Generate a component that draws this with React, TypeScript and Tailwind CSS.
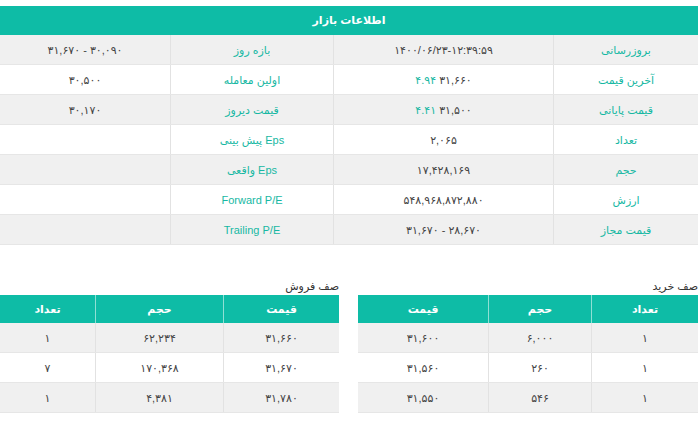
const font = { fontFamily: '"Liberation Sans", "DejaVu Sans", sans-serif' };

type Cell = { text: string; accent?: string };

const infoRows: [string, Cell, string, Cell][] = [
  ["بروزرسانی", { text: "۱۴۰۰/۰۶/۲۳-۱۲:۳۹:۵۹" }, "بازه روز", { text: "۳۱,۶۷۰ - ۳۰,۰۹۰" }],
  ["آخرین قیمت", { text: "۳۱,۶۶۰", accent: "۴.۹۴" }, "اولین معامله", { text: "۳۰,۵۰۰" }],
  ["قیمت پایانی", { text: "۳۱,۵۰۰", accent: "۴.۴۱" }, "قیمت دیروز", { text: "۳۰,۱۷۰" }],
  ["تعداد", { text: "۲,۰۶۵" }, "Eps پیش بینی", { text: "" }],
  ["حجم", { text: "۱۷,۴۲۸,۱۶۹" }, "Eps واقعی", { text: "" }],
  ["ارزش", { text: "۵۴۸,۹۶۸,۸۷۲,۸۸۰" }, "Forward P/E", { text: "" }],
  ["قیمت مجاز", { text: "۳۱,۶۷۰ - ۲۸,۶۷۰" }, "Trailing P/E", { text: "" }],
];

function Value({ cell }: { cell: Cell }) {
  return (
    <span dir="ltr" className="text-[#444]">
      {cell.accent && <span className="text-[#17b8a3]">{cell.accent} </span>}
      {cell.text}
    </span>
  );
}

function InfoTable() {
  return (
    <div>
      <div className="h-[29px] bg-[#0ebca6] flex items-center justify-center text-white font-bold text-[11px]">
        اطلاعات بازار
      </div>
      {infoRows.map((r, i) => (
        <div
          key={i}
          className={`grid grid-cols-[145px_220px_163px_170px] h-[30px] border-b border-[#e6e6e6] text-[11px] ${
            i % 2 === 0 ? "bg-[#f0f0f0]" : "bg-white"
          }`}
        >
          <div className="flex items-center justify-center pt-[2px] text-[#17b8a3] border-l border-[#e2e2e2]">{r[0]}</div>
          <div className="flex items-center justify-center pt-[2px] border-l border-[#e2e2e2]">
            <Value cell={r[1]} />
          </div>
          <div className="flex items-center justify-center pt-[2px] text-[#17b8a3] border-l border-[#e2e2e2]">{r[2]}</div>
          <div className="flex items-center justify-center pt-[2px]">
            <Value cell={r[3]} />
          </div>
        </div>
      ))}
    </div>
  );
}

function QueueTable({
  title,
  cols,
  heads,
  rows,
  width,
}: {
  title: string;
  cols: string;
  heads: string[];
  rows: string[][];
  width: string;
}) {
  return (
    <div className={width}>
      <div className="text-[11px] text-[#333] h-[17px] leading-[17px]">{title}</div>
      <div className={`grid ${cols} h-[28px] bg-[#0ebca6] text-white font-bold text-[11px]`}>
        {heads.map((h, i) => (
          <div
            key={i}
            className={`flex items-center justify-center ${i < heads.length - 1 ? "border-l border-[#8fe0d4]" : ""}`}
          >
            {h}
          </div>
        ))}
      </div>
      {rows.map((r, i) => (
        <div
          key={i}
          className={`grid ${cols} h-[30px] border-b border-[#e6e6e6] text-[11px] text-[#444] ${
            i % 2 === 0 ? "bg-[#f0f0f0]" : "bg-white"
          }`}
        >
          {r.map((c, j) => (
            <div
              key={j}
              className={`flex items-center justify-center pt-[2px] ${j < r.length - 1 ? "border-l border-[#e2e2e2]" : ""}`}
            >
              <span dir="ltr">{c}</span>
            </div>
          ))}
        </div>
      ))}
    </div>
  );
}

export default function App() {
  return (
    <div className="w-[700px] h-[426px] bg-white pt-[6px] overflow-hidden">
      <div dir="rtl" style={font} className="w-[698px]">
        <InfoTable />
        <div className="flex justify-between mt-[33px]">
          <QueueTable
            title="صف خرید"
            width="w-[340px]"
            cols="grid-cols-[107px_103px_130px]"
            heads={["تعداد", "حجم", "قیمت"]}
            rows={[
              ["۱", "۶,۰۰۰", "۳۱,۶۰۰"],
              ["۱", "۲۶۰", "۳۱,۵۶۰"],
              ["۱", "۵۴۶", "۳۱,۵۵۰"],
            ]}
          />
          <QueueTable
            title="صف فروش"
            width="w-[339px]"
            cols="grid-cols-[116px_128px_95px]"
            heads={["قیمت", "حجم", "تعداد"]}
            rows={[
              ["۳۱,۶۶۰", "۶۲,۲۳۴", "۱"],
              ["۳۱,۶۷۰", "۱۷۰,۳۶۸", "۷"],
              ["۳۱,۷۸۰", "۴,۳۸۱", "۱"],
            ]}
          />
        </div>
      </div>
    </div>
  );
}
